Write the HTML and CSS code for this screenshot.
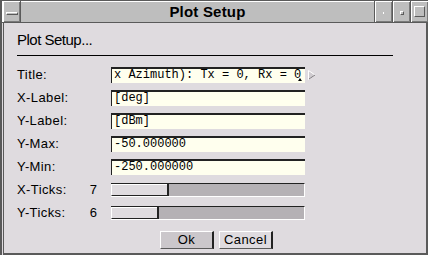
FILE: index.html
```html
<!DOCTYPE html>
<html>
<head>
<meta charset="utf-8">
<link rel="stylesheet" href="styles.css">
</head>
<body>
<div class="win">
  <div class="titlebar">
    <div class="tb-btn menu"><span class="menu-bar"></span></div>
    <div class="tb-title">Plot Setup</div>
    <div class="tb-btn"><span class="dot"></span></div>
    <div class="tb-btn"><span class="small-sq"></span></div>
    <div class="tb-btn"><span class="big-sq"></span></div>
  </div>
  <div class="client">
    <div class="heading">Plot Setup...</div>
    <div class="rule"></div>
    <div class="form">
      <div class="row">
        <div class="label">Title:</div>
        <div class="entry"><span class="etext">x Azimuth): Tx = 0, Rx = 0</span><span class="cursor"></span></div>
        <svg class="arrow" width="8" height="10" viewBox="0 0 8 10"><polygon points="0.5,0.5 7,5 0.5,9.5" fill="#d0ccd0" stroke="#fff" stroke-width="1"/><polyline points="1,9 7,5" stroke="#7a767a" fill="none" stroke-width="1"/></svg>
      </div>
      <div class="row">
        <div class="label">X-Label:</div>
        <div class="entry"><span class="etext">[deg]</span></div>
      </div>
      <div class="row">
        <div class="label">Y-Label:</div>
        <div class="entry"><span class="etext">[dBm]</span></div>
      </div>
      <div class="row">
        <div class="label">Y-Max:</div>
        <div class="entry"><span class="etext">-50.000000</span></div>
      </div>
      <div class="row">
        <div class="label">Y-Min:</div>
        <div class="entry"><span class="etext">-250.000000</span></div>
      </div>
      <div class="row">
        <div class="label">X-Ticks:<span class="val">7</span></div>
        <div class="trough"><div class="thumb" style="width:58px"></div></div>
      </div>
      <div class="row">
        <div class="label">Y-Ticks:<span class="val">6</span></div>
        <div class="trough"><div class="thumb" style="width:48px"></div></div>
      </div>
    </div>
    <div class="buttons">
      <div class="btn default">Ok</div>
      <div class="btn">Cancel</div>
    </div>
  </div>
</div>
</body>
</html>
```
FILE: styles.css
```css
html, body {
  margin: 0;
  padding: 0;
}
body {
  background: #ffffff;
  width: 430px;
  height: 258px;
  overflow: hidden;
  font-family: "Liberation Sans", Arial, sans-serif;
  color: #000;
}
.win {
  width: 428px;
  height: 255px;
  box-sizing: border-box;
  border-left: 2px solid #5a5a5a;
  background: #dfdbdf;
  display: flex;
  flex-direction: column;
}
.titlebar {
  height: 23px;
  box-sizing: border-box;
  border-top: 1px solid #5a5a5a;
  border-bottom: 1px solid #5a5a5a;
  background: #bebebe;
  display: flex;
}
.tb-btn {
  width: 18px;
  box-sizing: border-box;
  border-left: 1px solid #5a5a5a;
  box-shadow: inset 1px 1px #fff, inset -1px -1px #7a7a7a;
  display: flex;
  align-items: center;
  justify-content: center;
  background: #bebebe;
}
.tb-btn.menu {
  width: 19px;
  border-left: 1px solid #fff;
  border-right: 1px solid #5a5a5a;
}
.menu-bar {
  width: 12px;
  height: 3px;
  box-sizing: border-box;
  border: 1px solid #fff;
  border-right-color: #5a5a5a;
  border-bottom-color: #5a5a5a;
  margin-top: 3px;
}
.tb-title {
  flex: 1;
  box-shadow: inset 0 1px #fff;
  text-align: center;
  font-weight: bold;
  font-size: 15px;
  letter-spacing: 0.2px;
  line-height: 22px;
  padding-left: 20px;
}
.dot {
  width: 1px;
  height: 2px;
  background: #fff;
  margin-top: 2px;
}
.small-sq {
  width: 4px;
  height: 4px;
  box-sizing: border-box;
  border: 1px solid #fff;
  border-right-color: #5a5a5a;
  border-bottom-color: #5a5a5a;
  margin-top: 2px;
}
.big-sq {
  width: 11px;
  height: 11px;
  box-sizing: border-box;
  border: 1px solid #fff;
  border-right-color: #5a5a5a;
  border-bottom-color: #5a5a5a;
}
.client {
  flex: 1;
  margin-left: 1px;
  border-left: 1px solid #5a5a5a;
  border-right: 2px solid #5a5a5a;
  border-bottom: 2px solid #5a5a5a;
  padding-left: 13px;
  display: flex;
  flex-direction: column;
}
.heading {
  font-size: 15px;
  letter-spacing: -0.5px;
  line-height: 16px;
  margin-top: 9px;
  height: 16px;
}
.rule {
  width: 376px;
  height: 1px;
  background: #000;
  margin-top: 7px;
}
.form {
  margin-top: 7px;
  display: flex;
  flex-direction: column;
}
.row {
  height: 23px;
  display: flex;
  align-items: center;
}
.label {
  width: 94px;
  font-size: 13px;
  letter-spacing: 0.4px;
  display: flex;
  justify-content: space-between;
  padding-right: 14px;
  box-sizing: border-box;
}
.val {
  letter-spacing: 0;
}
.entry {
  width: 194px;
  height: 16px;
  box-sizing: border-box;
  background: #ffffee;
  border-top: 2px solid #222;
  border-left: 1px solid #222;
  font-family: "Liberation Mono", "Courier New", monospace;
  font-size: 12px;
  line-height: 13px;
  padding-left: 2px;
  overflow: hidden;
  white-space: nowrap;
  position: relative;
}
.cursor {
  position: absolute;
  left: 186px;
  top: 9px;
  width: 0;
  height: 0;
  border-left: 2px solid transparent;
  border-right: 2px solid transparent;
  border-bottom: 3px solid #000;
}
.arrow {
  margin-left: 3px;
}
.trough {
  width: 194px;
  height: 14px;
  box-sizing: border-box;
  background: #b5b1b5;
  border-top: 1px solid #222;
  border-right: 1px solid #fff;
  border-bottom: 1px solid #fff;
  display: flex;
}
.thumb {
  height: 100%;
  box-sizing: border-box;
  background: #dfdbdf;
  border-left: 1px solid #fff;
  border-bottom: 1px solid #222;
  border-right: 2px solid #222;
  box-shadow: inset 0 1px #fff;
}
.buttons {
  display: flex;
  gap: 5px;
  margin-top: 7px;
  padding-left: 143px;
}
.btn {
  height: 18px;
  box-sizing: border-box;
  font-size: 13px;
  letter-spacing: 0.4px;
  line-height: 16px;
  text-align: center;
  border-top: 1px solid #fff;
  border-left: 1px solid #fff;
  border-right: 2px solid #222;
  border-bottom: 1px solid #5a5a5a;
  width: 54px;
  background: #dfdbdf;
}
.btn.default {
  background: #cbc7cb;
}
```
